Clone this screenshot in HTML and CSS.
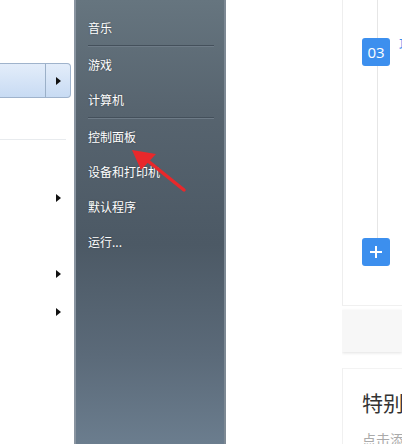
FILE: index.html
```html
<!DOCTYPE html>
<html lang="zh-CN">
<head>
    <meta charset="UTF-8">
    <meta name="viewport" content="width=device-width, initial-scale=1.0">
    <title>开始菜单</title>
    <link rel="stylesheet" href="styles.css">
</head>
<body>
    <div class="screen">
        <div class="left-pane">
            <div class="pinned-item">
                <span class="pinned-main"></span>
                <span class="pinned-split"><span class="tri"></span></span>
            </div>
            <div class="left-rule"></div>
            <div class="left-arrow arrow-a"><span class="tri"></span></div>
            <div class="left-arrow arrow-b"><span class="tri"></span></div>
            <div class="left-arrow arrow-c"><span class="tri"></span></div>
        </div>

        <div class="start-menu">
            <ul class="menu-list">
                <li class="menu-item">音乐</li>
                <li class="menu-sep"></li>
                <li class="menu-item">游戏</li>
                <li class="menu-item">计算机</li>
                <li class="menu-sep"></li>
                <li class="menu-item">控制面板</li>
                <li class="menu-item">设备和打印机</li>
                <li class="menu-item">默认程序</li>
                <li class="menu-item">运行...</li>
            </ul>
            <svg class="red-arrow" width="70" height="60" viewBox="0 0 70 60">
                <path d="M58 48 L22 19" stroke="#e8282b" stroke-width="3.5" stroke-linecap="round"/>
                <path d="M6 8 L30 12 L15 28 Z" fill="#e8282b"/>
            </svg>
        </div>

        <div class="blank-pane"></div>

        <div class="timeline-col">
            <div class="timeline">
                <div class="step-row">
                    <span class="step-box">03</span>
                    <span class="step-title">项目</span>
                </div>
                <div class="step-row add-row">
                    <span class="step-box plus">
                        <svg width="14" height="14" viewBox="0 0 14 14">
                            <path d="M7 1 V13 M1 7 H13" stroke="#fff" stroke-width="2"/>
                        </svg>
                    </span>
                </div>
            </div>
            <div class="band"></div>
            <div class="card">
                <div class="card-title">特别提示</div>
                <div class="card-text">点击添加</div>
            </div>
        </div>
    </div>
</body>
</html>
```

FILE: styles.css
```css
body {
    margin: 0;
    padding: 0;
    background-color: #fff;
    font-family: "Noto Sans CJK SC", "Liberation Sans", sans-serif;
    overflow: hidden;
}
.screen {
    display: grid;
    grid-template-columns: 74px 152px 116px 60px;
    height: 444px;
    overflow: hidden;
}

/* left program list */
.left-pane {
    position: relative;
    background-color: #fff;
}
.pinned-item {
    display: flex;
    margin-top: 63px;
    width: 71px;
    height: 35px;
    box-sizing: border-box;
    border: 1px solid #9fb3cc;
    border-left: none;
    border-radius: 0 4px 4px 0;
    background: linear-gradient(to bottom, #e3edfa, #c8dbf3);
}
.pinned-main {
    width: 45px;
    border-right: 1px solid #9bb0c8;
}
.pinned-split {
    flex: 1;
    display: flex;
    align-items: center;
    justify-content: center;
}
.tri {
    display: block;
    width: 0;
    height: 0;
    border-top: 4px solid transparent;
    border-bottom: 4px solid transparent;
    border-left: 5px solid #111;
}
.left-rule {
    margin-top: 41px;
    width: 66px;
    height: 1px;
    background-color: #e8ebee;
}
.left-arrow {
    position: absolute;
    left: 56px;
}
.arrow-a { top: 194px; }
.arrow-b { top: 270px; }
.arrow-c { top: 308px; }

/* dark start menu column */
.start-menu {
    position: relative;
    box-sizing: border-box;
    border-left: 2px solid #8994a0;
    border-right: 2px solid #7d8994;
    background: linear-gradient(to bottom, #66757f 0%, #57646f 25%, #4c5965 55%, #5b6a79 80%, #6b7d8e 100%);
}
.menu-list {
    list-style: none;
    margin: 0;
    padding: 10px 0 0 0;
}
.menu-item {
    height: 35px;
    line-height: 35px;
    padding-left: 12px;
    font-size: 12px;
    color: #fff;
    text-shadow: 0 0 2px rgba(0,0,0,0.35);
}
.menu-sep {
    height: 1px;
    margin: 0 10px 0 12px;
    background-color: #44505b;
    border-bottom: 1px solid #6e7b87;
}
.red-arrow {
    position: absolute;
    left: 50px;
    top: 142px;
}

.blank-pane {
    background-color: #fff;
}

/* right timeline column */
.timeline-col {
    display: flex;
    flex-direction: column;
    overflow: hidden;
}
.timeline {
    position: relative;
    flex-shrink: 0;
    height: 305px;
    border-left: 1px solid #eeeeee;
    border-bottom: 1px solid #f0f0f0;
}
.timeline::before {
    content: "";
    position: absolute;
    left: 34px;
    top: 0;
    height: 240px;
    border-left: 1px solid #e6e6e6;
}
.step-row {
    position: relative;
    display: flex;
    align-items: center;
    gap: 9px;
    margin-left: 19px;
    padding-top: 38px;
}
.add-row {
    padding-top: 172px;
}
.step-box {
    display: flex;
    align-items: center;
    justify-content: center;
    width: 28px;
    height: 28px;
    flex-shrink: 0;
    border-radius: 3px;
    background-color: #3c8fee;
    color: #fff;
    font-family: "Open Sans", "Liberation Sans", sans-serif;
    font-size: 15px;
}
.step-title {
    align-self: flex-start;
    margin-top: -4px;
    font-size: 14px;
    color: #3c8fee;
    white-space: nowrap;
}
.band {
    flex-shrink: 0;
    margin-top: 4px;
    height: 42px;
    background-color: #f7f7f7;
    box-shadow: 0 1px 3px rgba(0,0,0,0.12);
}
.card {
    flex-shrink: 0;
    margin-top: 16px;
    padding: 18px 0 0 19px;
    border-left: 1px solid #f0f0f0;
    border-top: 1px solid #f3f3f3;
}
.card-title {
    font-size: 21px;
    color: #333;
    white-space: nowrap;
}
.card-text {
    margin-top: 12px;
    font-size: 14px;
    color: #aaa;
    white-space: nowrap;
}
```
